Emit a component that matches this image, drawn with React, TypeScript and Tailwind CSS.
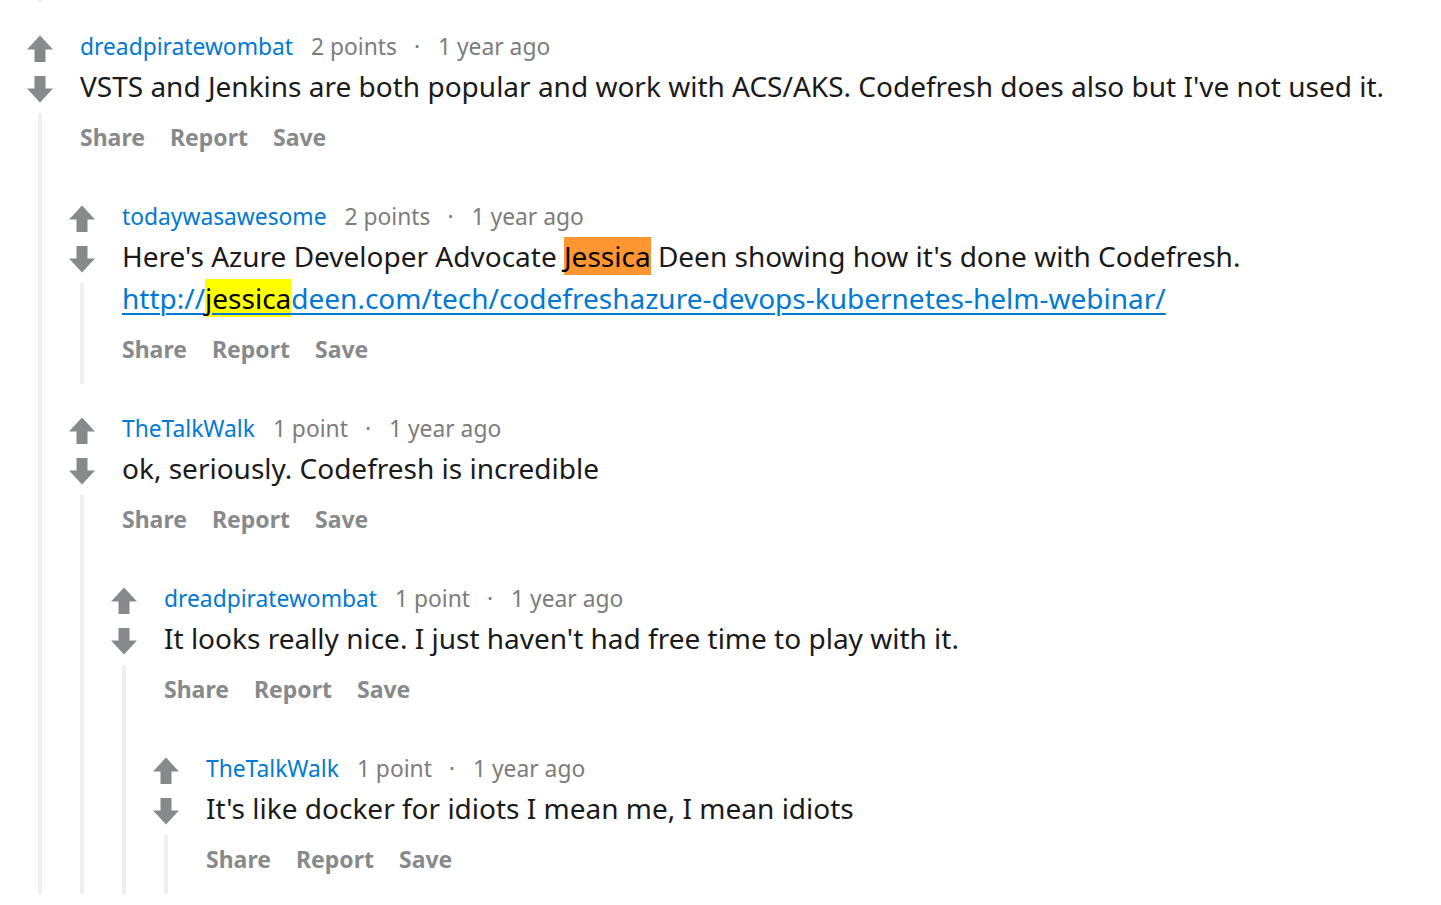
import type { ReactNode } from "react";

type CommentData = {
  id: string;
  author: string;
  points: string;
  time: string;
  body: ReactNode;
  replies?: CommentData[];
};

function VoteArrow({ down }: { down?: boolean }) {
  return (
    <svg
      width="26"
      height="27"
      viewBox="0 0 26 27"
      className={down ? "rotate-180" : ""}
      aria-hidden="true"
    >
      <polygon points="13,0.5 26,14.5 18.5,14.5 18.5,27 7.5,27 7.5,14.5 0,14.5" fill="#878a8c" />
    </svg>
  );
}

const thread: CommentData = {
  id: "c1",
  author: "dreadpiratewombat",
  points: "2 points",
  time: "1 year ago",
  body: "VSTS and Jenkins are both popular and work with ACS/AKS. Codefresh does also but I've not used it.",
  replies: [
    {
      id: "c2",
      author: "todaywasawesome",
      points: "2 points",
      time: "1 year ago",
      body: (
        <>
          Here's Azure Developer Advocate <span className="bg-[#ff9632] text-black">Jessica</span> Deen
          showing how it's done with Codefresh.{" "}
          <a
            href="#"
            className="text-[#0079d3] underline decoration-[#0079d3] decoration-2 underline-offset-[4px]"
          >
            http://<span className="bg-[#ffff00] text-black">jessica</span>
            deen.com/tech/codefreshazure-devops-kubernetes-helm-webinar/
          </a>
        </>
      ),
    },
    {
      id: "c3",
      author: "TheTalkWalk",
      points: "1 point",
      time: "1 year ago",
      body: "ok, seriously. Codefresh is incredible",
      replies: [
        {
          id: "c4",
          author: "dreadpiratewombat",
          points: "1 point",
          time: "1 year ago",
          body: "It looks really nice. I just haven't had free time to play with it.",
          replies: [
            {
              id: "c5",
              author: "TheTalkWalk",
              points: "1 point",
              time: "1 year ago",
              body: "It's like docker for idiots I mean me, I mean idiots",
            },
          ],
        },
      ],
    },
  ],
};

function Comment({ comment }: { comment: CommentData }) {
  return (
    <div className="flex">
      <div className="flex w-[42px] shrink-0 flex-col items-center">
        <button type="button" className="mt-[2px]" aria-label="upvote">
          <VoteArrow />
        </button>
        <button type="button" className="mt-[14px]" aria-label="downvote">
          <VoteArrow down />
        </button>
        <div className="mt-[10px] w-[4px] flex-1 bg-[#edeff1]" />
      </div>

      <div className="min-w-0 flex-1">
        <div className="pb-[19px] pl-[19px]">
          <div className="flex h-[28px] items-center gap-[17px] text-[22.8px] leading-[28px] text-[#7c7c7c]">
            <a href="#" className="mr-[1px] text-[#0079d3]">
              {comment.author}
            </a>
            <span>{comment.points}</span>
            <span className="mr-[1px]">·</span>
            <span>{comment.time}</span>
          </div>
          <p className="mt-[4px] text-[28px] leading-[42px] text-[#1a1a1b]">{comment.body}</p>
          <div className="mt-[14px] flex h-[32px] items-center gap-[25px] text-[23px] font-bold leading-[32px] text-[#878a8c]">
            <button type="button">Share</button>
            <button type="button">Report</button>
            <button type="button">Save</button>
          </div>
        </div>
        {comment.replies?.map((reply) => (
          <div key={reply.id} className="pt-[31px]">
            <Comment comment={reply} />
          </div>
        ))}
      </div>
    </div>
  );
}

export default function App() {
  return (
    <div className="min-h-screen overflow-hidden bg-white pl-[19px] font-['Noto_Sans',sans-serif]">
      <div className="ml-[19px] h-[2px] w-[4px] bg-[#edeff1]" />
      <div className="pt-[31px]">
        <Comment comment={thread} />
      </div>
    </div>
  );
}
